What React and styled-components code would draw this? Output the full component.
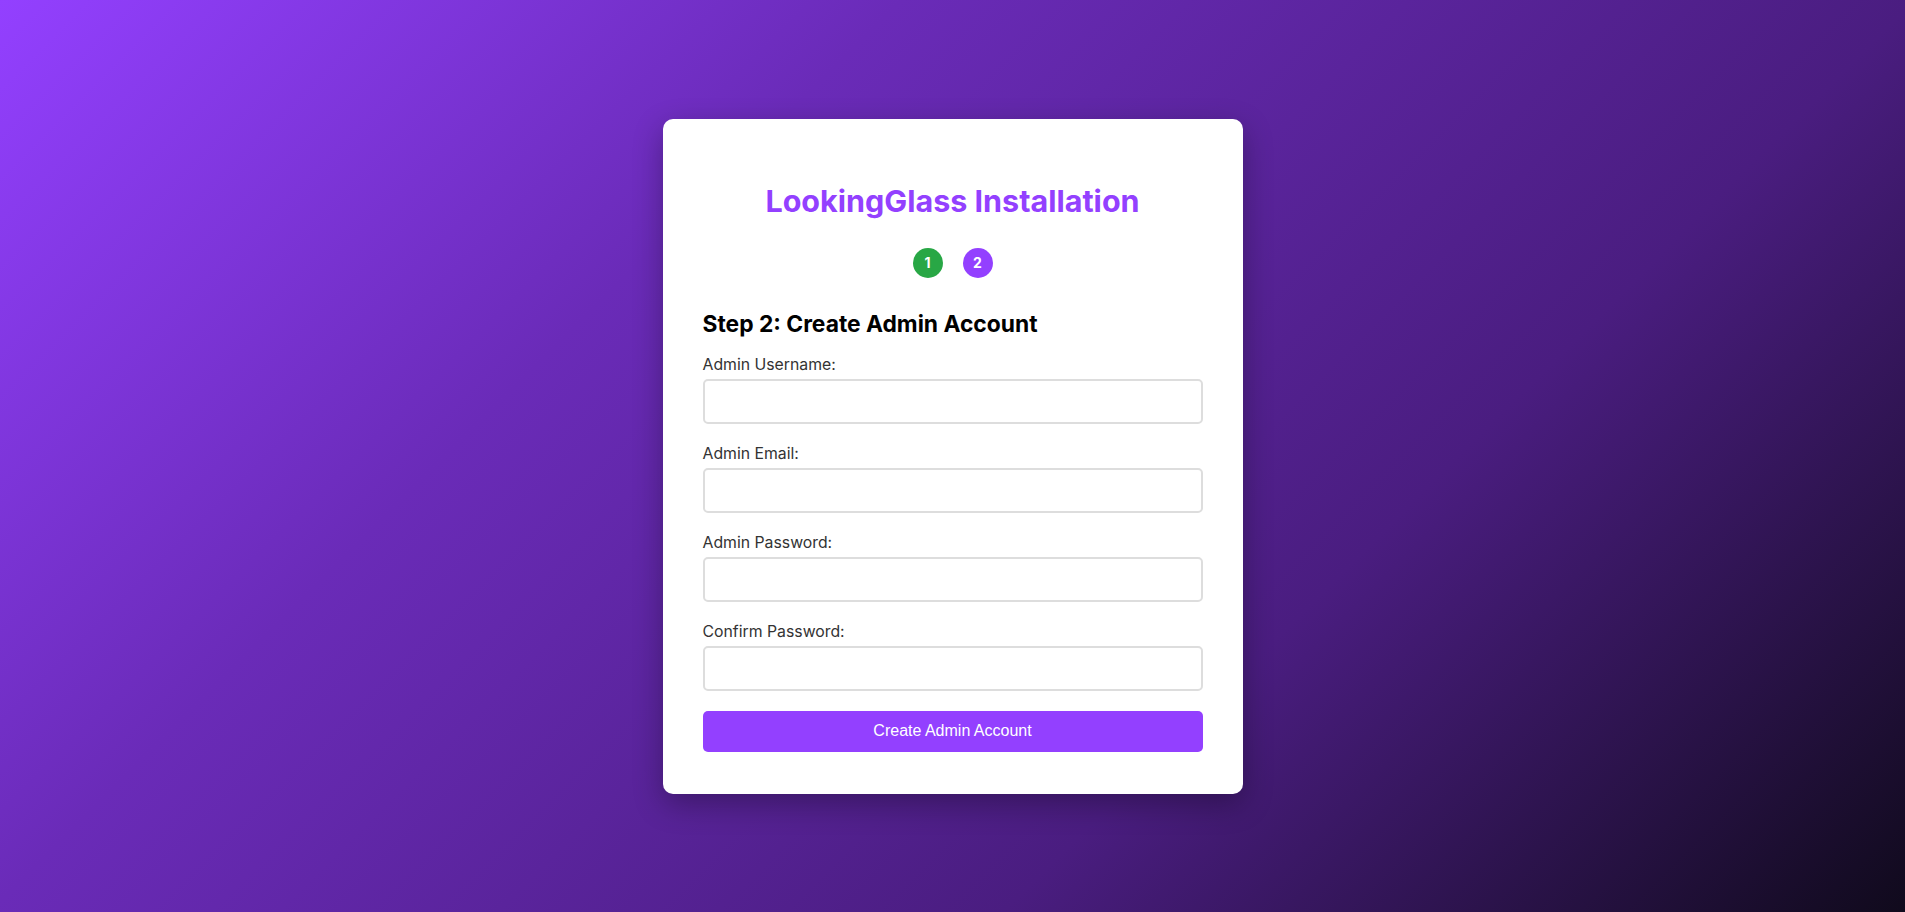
import React from "react"
import styled, { createGlobalStyle } from "styled-components"

const GlobalStyle = createGlobalStyle`
    * {
        box-sizing: border-box;
    }
    html, body {
        margin: 0;
        padding: 0;
    }
    body {
        font-family: Inter, "Noto Sans", sans-serif;
        background: linear-gradient(135deg, #9340ff 0%, #6a2bb8 32%, #4a1d80 68%, #100a1c 100%);
        min-height: 100vh;
    }
`

const fields = [
    { id: "username", label: "Admin Username:", type: "text" },
    { id: "email", label: "Admin Email:", type: "email" },
    { id: "password", label: "Admin Password:", type: "password" },
    { id: "confirm", label: "Confirm Password:", type: "password" },
]

export default function App(){
    return(
        <>
            <GlobalStyle />
            <Page>
                <Card>
                    <Title>LookingGlass Installation</Title>
                    <Steps>
                        <StepDot done>1</StepDot>
                        <StepDot>2</StepDot>
                    </Steps>
                    <Heading>Step 2: Create Admin Account</Heading>
                    <form onSubmit={e => e.preventDefault()}>
                        {fields.map(f => (
                            <Group key={f.id}>
                                <Label htmlFor={f.id}>{f.label}</Label>
                                <Input id={f.id} type={f.type} />
                            </Group>
                        ))}
                        <Button type="submit">Create Admin Account</Button>
                    </form>
                </Card>
            </Page>
        </>
    )
}

const Page = styled.div`
    min-height: 100vh;
    display: flex;
    align-items: center;
    justify-content: center;
`

const Card = styled.div`
    width: 580px;
    background: #ffffff;
    border-radius: 10px;
    padding: 40px 40px 42px;
    box-shadow: 0 10px 30px rgba(0, 0, 0, 0.3);
`

const Title = styled.h1`
    margin: 25px 0 30px;
    text-align: center;
    font-size: 30.5px;
    font-weight: 700;
    line-height: 34px;
    color: #9340ff;
`

const Steps = styled.div`
    display: flex;
    justify-content: center;
    gap: 20px;
    margin-bottom: 31px;
`

const StepDot = styled.div`
    width: 30px;
    height: 30px;
    border-radius: 50%;
    display: flex;
    align-items: center;
    justify-content: center;
    background: ${p => p.done ? "#28a745" : "#9340ff"};
    color: #ffffff;
    font-size: 14px;
    font-weight: 700;
`

const Heading = styled.h2`
    margin: 0 0 17px;
    font-size: 22.8px;
    font-weight: 700;
    line-height: 29px;
    color: #000;
`

const Group = styled.div`
    margin-bottom: 20px;
`

const Label = styled.label`
    display: block;
    margin-bottom: 5px;
    font-size: 15.8px;
    line-height: 19px;
    color: #333;
`

const Input = styled.input`
    display: block;
    width: 100%;
    height: 45px;
    padding: 10px;
    border: 2px solid #ddd;
    border-radius: 5px;
    font-size: 16px;
    font-family: Inter, sans-serif;
    outline: none;
`

const Button = styled.button`
    display: block;
    width: 100%;
    height: 41px;
    margin-top: 1px;
    border: none;
    border-radius: 5px;
    background: #9340ff;
    color: #ffffff;
    font-family: "Liberation Sans", Arial, sans-serif;
    font-size: 16px;
    cursor: pointer;
`
